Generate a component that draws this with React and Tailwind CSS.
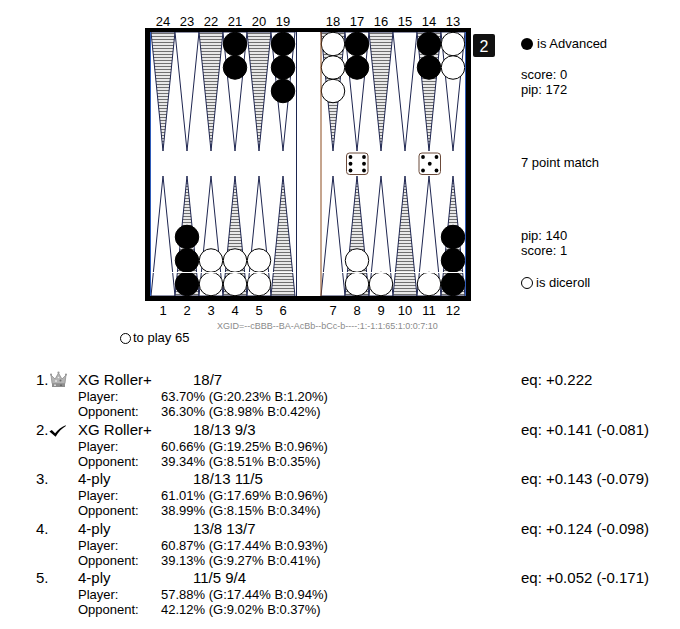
const FONT = "Liberation Sans, Arial, sans-serif";

const topLabels = [24, 23, 22, 21, 20, 19, 18, 17, 16, 15, 14, 13];
const bottomLabels = [1, 2, 3, 4, 5, 6, 7, 8, 9, 10, 11, 12];

// [colour, count] per column, left to right
const topStacks = [null, null, null, ["b", 2], null, ["b", 3], ["w", 3], ["b", 2], null, null, ["b", 2], ["w", 2]];
const bottomStacks = [null, ["b", 3], ["w", 2], ["w", 2], ["w", 2], null, null, ["w", 2], ["w", 1], null, ["w", 1], ["b", 3]];

const colX = (c) => (c < 6 ? 151 + 24 * c : 321 + 24 * (c - 6));

const moves = [
  {
    n: "1.",
    icon: "crown",
    name: "XG Roller+",
    move: "18/7",
    eq: "eq: +0.222",
    player: "63.70% (G:20.23% B:1.20%)",
    opponent: "36.30% (G:8.98% B:0.42%)",
  },
  {
    n: "2.",
    icon: "check",
    name: "XG Roller+",
    move: "18/13 9/3",
    eq: "eq: +0.141 (-0.081)",
    player: "60.66% (G:19.25% B:0.96%)",
    opponent: "39.34% (G:8.51% B:0.35%)",
  },
  {
    n: "3.",
    name: "4-ply",
    move: "18/13 11/5",
    eq: "eq: +0.143 (-0.079)",
    player: "61.01% (G:17.69% B:0.96%)",
    opponent: "38.99% (G:8.15% B:0.34%)",
  },
  {
    n: "4.",
    name: "4-ply",
    move: "13/8 13/7",
    eq: "eq: +0.124 (-0.098)",
    player: "60.87% (G:17.44% B:0.93%)",
    opponent: "39.13% (G:9.27% B:0.41%)",
  },
  {
    n: "5.",
    name: "4-ply",
    move: "11/5 9/4",
    eq: "eq: +0.052 (-0.171)",
    player: "57.88% (G:17.44% B:0.94%)",
    opponent: "42.12% (G:9.02% B:0.37%)",
  },
];

const Die = ({ x, y, value }) => {
  const s = 21.5;
  const a = 4;
  const m = s / 2;
  const b = s - 4;
  const pips =
    value === 6
      ? [[a, a], [a, m], [a, b], [b, a], [b, m], [b, b]]
      : [[a, a], [b, a], [m, m], [a, b], [b, b]];
  return (
    <g>
      <rect x={x} y={y} width={s} height={s} rx="3" fill="#fff" stroke="#6b4a3a" strokeWidth="1" />
      {pips.map(([px, py], i) => (
        <circle key={i} cx={x + px} cy={y + py} r="1.9" fill="#000" />
      ))}
    </g>
  );
};

const Board = () => {
  return (
    <svg viewBox="120 0 380 321" width="380" height="321" className="block">
      <defs>
        <pattern id="stripes" width="4" height="3" patternUnits="userSpaceOnUse">
          <rect width="4" height="3" fill="#e8e8e8" />
          <rect width="4" height="1" fill="#707070" />
        </pattern>
      </defs>

      {topLabels.map((n, c) => (
        <text key={n} x={colX(c) + 12} y="26" textAnchor="middle" fontSize="13" fontFamily={FONT}>
          {n}
        </text>
      ))}
      {bottomLabels.map((n, c) => (
        <text key={n} x={colX(c) + 12} y="315" textAnchor="middle" fontSize="13" fontFamily={FONT}>
          {n}
        </text>
      ))}

      <rect x="150" y="32" width="316" height="264" fill="#fff" />

      {topLabels.map((n, c) => {
        const x0 = colX(c);
        return (
          <polygon
            key={"t" + n}
            points={`${x0},32 ${x0 + 24},32 ${x0 + 12},151`}
            fill={c % 2 === 0 ? "url(#stripes)" : "#fff"}
            stroke="#1e2550"
            strokeWidth="1"
          />
        );
      })}
      {bottomLabels.map((n, c) => {
        const x0 = colX(c);
        return (
          <polygon
            key={"b" + n}
            points={`${x0},296 ${x0 + 24},296 ${x0 + 12},176`}
            fill={c % 2 === 1 ? "url(#stripes)" : "#fff"}
            stroke="#1e2550"
            strokeWidth="1"
          />
        );
      })}

      {topStacks.map((st, c) =>
        st
          ? Array.from({ length: st[1] }).map((_, k) => (
              <circle
                key={`tc${c}-${k}`}
                cx={colX(c) + 12}
                cy={44 + k * 23.5}
                r="11.75"
                fill={st[0] === "b" ? "#000" : "#fff"}
                stroke="#000"
                strokeWidth="1"
              />
            ))
          : null
      )}
      {bottomStacks.map((st, c) =>
        st
          ? Array.from({ length: st[1] }).map((_, k) => (
              <circle
                key={`bc${c}-${k}`}
                cx={colX(c) + 12}
                cy={284 - k * 23.5}
                r="11.75"
                fill={st[0] === "b" ? "#000" : "#fff"}
                stroke="#000"
                strokeWidth="1"
              />
            ))
          : null
      )}

      <Die x={346.5} y={153} value={6} />
      <Die x={419} y={153} value={5} />

      <line x1="151" y1="272.5" x2="466" y2="272.5" stroke="#fff" strokeWidth="1" />

      {/* half edges */}
      <line x1="150.5" y1="32" x2="150.5" y2="296" stroke="#2f5bb8" strokeWidth="1" />
      <line x1="296.5" y1="32" x2="296.5" y2="296" stroke="#1b2450" strokeWidth="1" />
      <line x1="321" y1="32" x2="321" y2="296" stroke="#8b4a1c" strokeWidth="1" />
      <line x1="465.5" y1="32" x2="465.5" y2="296" stroke="#2f5bb8" strokeWidth="1" />

      {/* frame */}
      <rect x="145" y="28" width="326" height="4" fill="#000" />
      <rect x="145" y="296" width="326" height="5" fill="#000" />
      <rect x="145" y="28" width="5" height="273" fill="#000" />
      <rect x="466" y="28" width="5" height="273" fill="#000" />

      {/* cube */}
      <rect x="473" y="34" width="22" height="23" rx="2" fill="#111" />
      <text x="484" y="51.5" textAnchor="middle" fontSize="16" fill="#fff" fontFamily={FONT}>
        2
      </text>
    </svg>
  );
};

const CrownIcon = () => (
  <svg width="17" height="17" viewBox="0 0 17 17">
    <polygon points="2,12.5 1,4 5,8 8.5,2 12,8 16,4 15,12.5" fill="#b4b4b4" stroke="#7a7a7a" strokeWidth="0.6" />
    <rect x="2" y="12.5" width="13" height="3.5" fill="#8e8e8e" />
    <circle cx="1" cy="3.5" r="1.1" fill="#9a9a9a" />
    <circle cx="8.5" cy="1.6" r="1.1" fill="#9a9a9a" />
    <circle cx="16" cy="3.5" r="1.1" fill="#9a9a9a" />
    <circle cx="6" cy="10" r="1" fill="#e6e6e6" />
    <circle cx="10.5" cy="9.5" r="1" fill="#6e6e6e" />
    <circle cx="8.5" cy="6.5" r="0.8" fill="#efefef" />
    <rect x="4" y="13.5" width="2" height="1.5" fill="#d8d8d8" />
    <rect x="10" y="13.5" width="2" height="1.5" fill="#6a6a6a" />
  </svg>
);

const CheckIcon = () => (
  <svg width="17" height="12" viewBox="0 0 17 12" className="translate-y-[2px]">
    <path d="M0.4 6.4 L2.8 4.9 L6.1 8.2 C9 4.6 12.4 1.8 16.6 0.2 L16.9 0.9 C13 3.2 9.6 6.6 6.6 11.8 Z" fill="#000" />
  </svg>
);

const MoveBlock = ({ m }) => (
  <div className="mt-[0.5px]">
    <div className="flex items-center text-[15px] leading-[19px]">
      <div className="w-[42px] flex items-center">
        <span>{m.n}</span>
        {m.icon === "crown" && (
          <span className="ml-[1px]">
            <CrownIcon />
          </span>
        )}
        {m.icon === "check" && (
          <span>
            <CheckIcon />
          </span>
        )}
      </div>
      <div className="w-[115px]">{m.name}</div>
      <div className="w-[328px]">{m.move}</div>
      <div>{m.eq}</div>
    </div>
    <div className="flex pl-[42px] text-[13px] leading-[15px]">
      <div className="w-[83px]">Player:</div>
      <div>{m.player}</div>
    </div>
    <div className="flex pl-[42px] text-[13px] leading-[15px]">
      <div className="w-[83px]">Opponent:</div>
      <div>{m.opponent}</div>
    </div>
  </div>
);

export default function App() {
  return (
    <div className="w-[680px] min-h-[629px] bg-white text-black font-['Liberation_Sans',Arial,sans-serif]">
      <div className="flex pl-[120px]">
        <div className="w-[380px]">
          <Board />
          <div className="pl-[97px] text-[9px] leading-[10px] text-[#8a8a8a] whitespace-nowrap">
            XGID=--cBBB--BA-AcBb--bCc-b----:1:-1:1:65:1:0:0:7:10
          </div>
          <div className="flex items-center text-[13px] leading-[14px]">
            <span className="inline-block w-[11px] h-[11px] rounded-full border border-black mr-[2px]" />
            <span>to play 65</span>
          </div>
        </div>
        <div className="ml-[21px] pt-[36px] text-[13px] leading-[15px]">
          <div className="flex items-center">
            <span className="inline-block w-[12px] h-[12px] rounded-full bg-black mr-[4px]" />
            <span>is Advanced</span>
          </div>
          <div className="mt-[16px]">score: 0</div>
          <div>pip: 172</div>
          <div className="mt-[58px]">7 point match</div>
          <div className="mt-[58px]">pip: 140</div>
          <div>score: 1</div>
          <div className="mt-[17px] flex items-center">
            <span className="inline-block w-[12px] h-[12px] rounded-full border border-black mr-[3px]" />
            <span>is diceroll</span>
          </div>
        </div>
      </div>
      <div className="mt-[25px] pl-[36px]">
        {moves.map((m) => (
          <MoveBlock key={m.n} m={m} />
        ))}
      </div>
    </div>
  );
}
